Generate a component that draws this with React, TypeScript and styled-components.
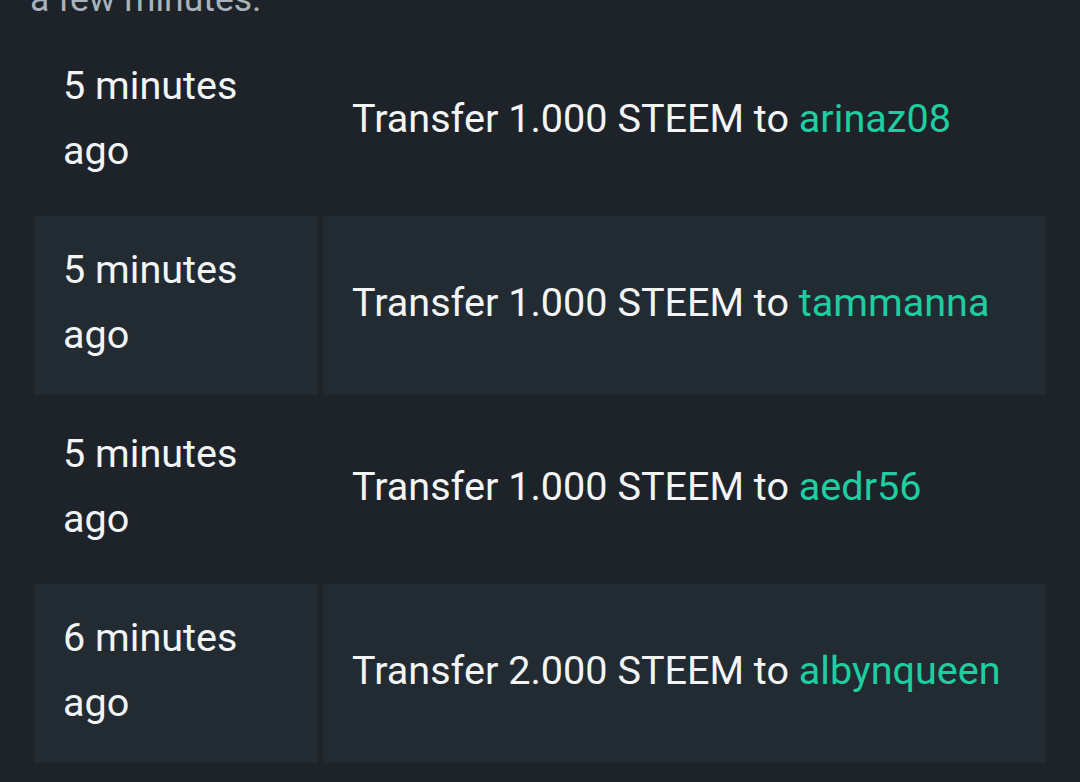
import React from "react";
import styled, { createGlobalStyle } from "styled-components";

const GlobalStyle = createGlobalStyle`
  html, body {
    margin: 0;
    padding: 0;
    background: #1e232a;
    overflow: hidden;
  }
  body {
    font-family: Roboto, "Liberation Sans", sans-serif;
    color: #f2f4f5;
  }
`;

const Page = styled.div`
  padding: 0 29px;
  min-height: 782px;
  background: #1e232a;
`;

const Intro = styled.p`
  margin: -27px 0 2px 1px;
  font-size: 35.5px;
  line-height: 52px;
  color: #a9b3bc;
`;

const Table = styled.table`
  width: 100%;
  border-collapse: separate;
  border-spacing: 5px;
  font-size: 39.6px;
  line-height: 65px;
`;

const Row = styled.tr<{ $shaded: boolean }>`
  background: ${(p) => (p.$shaded ? "#232b32" : "transparent")};
`;

const TimeCell = styled.td`
  width: 225px;
  padding: 21px 30px 28px 29px;
  vertical-align: middle;
  background: inherit;
`;

const OpCell = styled.td`
  padding: 21px 29px 28px;
  vertical-align: middle;
  background: inherit;
  white-space: nowrap;
`;

const Account = styled.a`
  color: #1fcea0;
  text-decoration: none;
`;

const transfers = [
  { when: "5 minutes ago", amount: "1.000", to: "arinaz08" },
  { when: "5 minutes ago", amount: "1.000", to: "tammanna" },
  { when: "5 minutes ago", amount: "1.000", to: "aedr56" },
  { when: "6 minutes ago", amount: "2.000", to: "albynqueen" },
];

const App = () => {
  return (
    <Page>
      <GlobalStyle />
      <Intro>a few minutes.</Intro>
      <Table>
        <tbody>
          {transfers.map((t, i) => (
            <Row key={i} $shaded={i % 2 === 1}>
              <TimeCell>{t.when}</TimeCell>
              <OpCell>
                Transfer {t.amount} STEEM to <Account href="#">{t.to}</Account>
              </OpCell>
            </Row>
          ))}
        </tbody>
      </Table>
    </Page>
  );
};

export default App;
